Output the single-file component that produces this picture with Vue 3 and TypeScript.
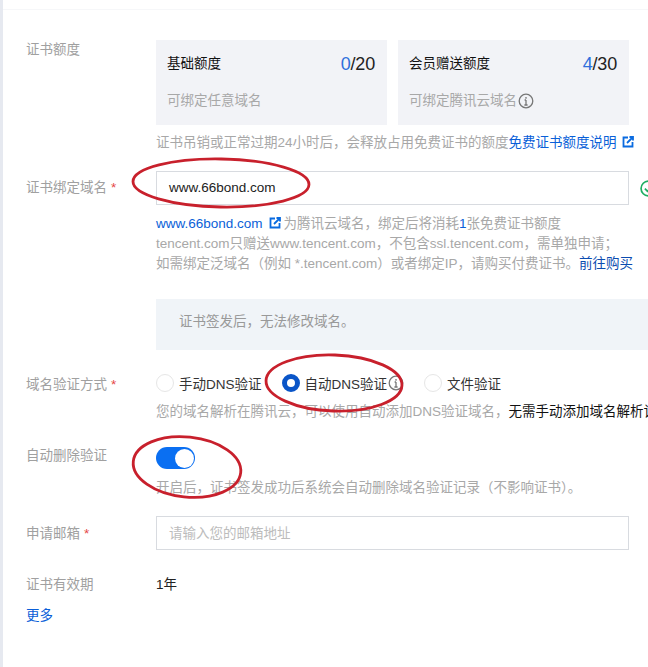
<script setup lang="ts">
const cards = [
  { title: '基础额度', used: '0', total: '/20', desc: '可绑定任意域名', info: false },
  { title: '会员赠送额度', used: '4', total: '/30', desc: '可绑定腾讯云域名', info: true },
]
const radios = [
  { label: '手动DNS验证', on: false, info: false },
  { label: '自动DNS验证', on: true, info: true },
  { label: '文件验证', on: false, info: false },
]
const ellipses = [
  { cx: 221, cy: 183, rx: 88, ry: 24, rot: 1 },
  { cx: 334, cy: 383, rx: 68, ry: 28, rot: 2 },
  { cx: 187, cy: 467, rx: 54, ry: 30, rot: 6 },
]
</script>

<template>
  <div class="page">
    <div class="form">
      <div class="row quota-row">
        <div class="label">证书额度</div>
        <div class="body">
          <div class="cards">
            <div v-for="c in cards" :key="c.title" class="card">
              <div class="card-top">
                <span class="card-title">{{ c.title }}</span>
                <span class="card-num"><em>{{ c.used }}</em>{{ c.total }}</span>
              </div>
              <div class="card-desc">
                {{ c.desc }}
                <svg v-if="c.info" class="info" viewBox="0 0 16 16"><circle cx="8" cy="8" r="6.8" /><path d="M8 7v5M8 4v1.8M6.6 7h1.4M6.4 12h3.2" /></svg>
              </div>
            </div>
          </div>
          <p class="hint hint-quota">
            证书吊销或正常过期24小时后，会释放占用免费证书的额度<a class="link">免费证书额度说明</a><svg class="ext wide" viewBox="0 0 12 12"><path d="M6 1.5H1.5v9h9V6" /><path d="M5 7l5.5-5.5M7.5 1h3.5v3.5" /></svg>
          </p>
        </div>
      </div>

      <div class="row domain-row">
        <div class="label center">证书绑定域名<i>*</i></div>
        <div class="body">
          <div class="input-wrap">
            <div class="input">www.66bond.com</div>
            <svg class="ok" viewBox="0 0 16 16"><circle cx="8" cy="8" r="7" /><path d="M4.6 8.2l2.4 2.4 4.4-4.6" /></svg>
          </div>
          <div class="domain-notes">
            <div><a class="link">www.66bond.com</a><svg class="ext first" viewBox="0 0 12 12"><path d="M6 1.5H1.5v9h9V6" /><path d="M5 7l5.5-5.5M7.5 1h3.5v3.5" /></svg>为腾讯云域名，绑定后将消耗<a class="link">1</a>张免费证书额度</div>
            <div>tencent.com只赠送www.tencent.com，不包含ssl.tencent.com，需单独申请；</div>
            <div>如需绑定泛域名（例如 *.tencent.com）或者绑定IP，请购买付费证书。<a class="link dark">前往购买</a></div>
          </div>
          <div class="notice">证书签发后，无法修改域名。</div>
        </div>
      </div>

      <div class="row method-row">
        <div class="label">域名验证方式<i>*</i></div>
        <div class="body">
          <div class="radios">
            <label v-for="r in radios" :key="r.label" class="radio">
              <span class="dot" :class="{ on: r.on }"></span>
              <span>{{ r.label }}</span>
              <svg v-if="r.info" class="info small" viewBox="0 0 16 16"><circle cx="8" cy="8" r="6.8" /><path d="M8 7v5M8 4v1.8M6.6 7h1.4M6.4 12h3.2" /></svg>
            </label>
          </div>
          <p class="hint hint-method">您的域名解析在腾讯云，可以使用自动添加DNS验证域名，<b>无需手动添加域名解析记录</b></p>
        </div>
      </div>

      <div class="row delete-row">
        <div class="label">自动删除验证</div>
        <div class="body">
          <div class="toggle"><span></span></div>
          <p class="hint hint-delete">开启后，证书签发成功后系统会自动删除域名验证记录（不影响证书）。</p>
        </div>
      </div>

      <div class="row mail-row">
        <div class="label center mail-label">申请邮箱<i>*</i></div>
        <div class="body">
          <div class="input placeholder">请输入您的邮箱地址</div>
        </div>
      </div>

      <div class="row valid-row">
        <div class="label">证书有效期</div>
        <div class="body value">1年</div>
      </div>

      <a class="link more">更多</a>
    </div>

    <svg class="marks" width="648" height="667" viewBox="0 0 648 667">
      <ellipse
        v-for="e in ellipses"
        :key="e.cx"
        :cx="e.cx"
        :cy="e.cy"
        :rx="e.rx"
        :ry="e.ry"
        :transform="`rotate(${e.rot} ${e.cx} ${e.cy})`"
      />
    </svg>
  </div>
</template>

<style>
html,
body {
  margin: 0;
  background: #fff;
  overflow: hidden;
}
</style>

<style scoped>
.page {
  position: relative;
  width: 648px;
  height: 667px;
  overflow: hidden;
  box-sizing: border-box;
  border-left: 3px solid #e6e9f0;
  font-family: "Liberation Sans", "Noto Sans CJK SC", sans-serif;
  font-size: 13.5px;
  color: #a8a8a8;
}
.form {
  box-sizing: border-box;
  width: 800px;
  margin-top: 9px;
  padding: 30px 0 0 23px;
  border-top: 1px solid #f6f7f9;
}
.row {
  display: flex;
}
.label {
  flex: none;
  width: 130px;
  line-height: 20px;
  color: #a0a0a0;
}
.label i {
  font-style: normal;
  color: #e54545;
  margin-left: 4px;
}
.label.center {
  line-height: 34px;
}
.label.mail-label {
  line-height: 36px;
}
.body {
  flex: none;
  width: 492px;
}
p {
  margin: 0;
}
.cards {
  display: flex;
  gap: 11px;
  width: 473px;
}
.card {
  flex: 1;
  height: 85px;
  box-sizing: border-box;
  padding: 9px 11px 0;
  background: #f2f3f7;
}
.card-top {
  display: flex;
  justify-content: space-between;
  align-items: center;
  height: 26px;
  color: #111;
}
.card-num {
  margin-top: 4px;
  margin-right: 1px;
  font-size: 18px;
  letter-spacing: -0.2px;
  color: #222;
}
.card-num em {
  font-style: normal;
  color: #2f6fdc;
}
.card-desc {
  display: flex;
  align-items: center;
  gap: 1px;
  margin-top: 16px;
  line-height: 20px;
}
.info {
  width: 16px;
  height: 16px;
  fill: none;
  stroke: #777;
  stroke-width: 1.3;
}
.info.small {
  margin-left: 1px;
}
.hint {
  line-height: 20px;
  white-space: nowrap;
}
.hint-quota {
  margin-top: 8px;
}
.link {
  color: #0a5fd8;
}
.link.dark {
  color: #0b4cb0;
}
.ext {
  width: 12px;
  height: 12px;
  vertical-align: -1px;
  fill: none;
  stroke: #0a6be0;
  stroke-width: 1.8;
}
.ext.wide {
  margin-left: 5px;
}
.ext.first {
  margin: 0 3px 0 6px;
}
.domain-row {
  margin-top: 18px;
}
.input-wrap {
  display: flex;
  align-items: center;
  gap: 11px;
}
.input {
  flex: none;
  box-sizing: border-box;
  width: 473px;
  height: 34px;
  padding-left: 12px;
  line-height: 32px;
  border: 1px solid #d8dbe0;
  color: #222;
}
.input.placeholder {
  line-height: 34px;
  color: #bcbcbc;
}
.ok {
  flex: none;
  width: 17px;
  height: 17px;
  fill: none;
  stroke: #1fae62;
  stroke-width: 1.6;
}
.domain-notes {
  margin-top: 9px;
  line-height: 20px;
  white-space: nowrap;
}
.notice {
  box-sizing: border-box;
  width: 500px;
  height: 51px;
  margin-top: 25px;
  padding: 13px 23px;
  line-height: 20px;
  background: #f0f4f8;
  color: #999;
}
.method-row {
  margin-top: 23px;
}
.method-row .label {
  line-height: 24px;
}
.radios {
  display: flex;
  align-items: center;
  gap: 20px;
  height: 20px;
}
.radio {
  display: flex;
  align-items: center;
  color: #333;
}
.dot {
  flex: none;
  box-sizing: border-box;
  width: 18px;
  height: 18px;
  margin-right: 5px;
  border: 1px solid #e6e6e6;
  border-radius: 50%;
  background: #fff;
}
.dot.on {
  border: 5px solid #0a55c8;
}
.hint-method {
  margin-top: 9px;
}
.hint-method b {
  font-weight: 400;
  color: #111;
}
.delete-row {
  margin-top: 24px;
}
.toggle {
  display: flex;
  justify-content: flex-end;
  align-items: center;
  width: 39px;
  height: 22px;
  margin-top: 1px;
  padding-right: 1px;
  box-sizing: border-box;
  border-radius: 11px;
  background: #0a6ff2;
}
.toggle span {
  width: 19px;
  height: 19px;
  border-radius: 50%;
  background: #fff;
}
.hint-delete {
  margin-top: 9px;
}
.mail-row {
  margin-top: 18px;
}
.valid-row {
  margin-top: 23px;
}
.value {
  color: #222;
  line-height: 20px;
}
.more {
  display: block;
  width: 40px;
  margin-top: 11px;
  line-height: 20px;
}
.marks {
  position: absolute;
  left: -3px;
  top: 0;
  pointer-events: none;
}
.marks ellipse {
  fill: none;
  stroke: #c8202c;
  stroke-width: 2.8;
}
</style>
